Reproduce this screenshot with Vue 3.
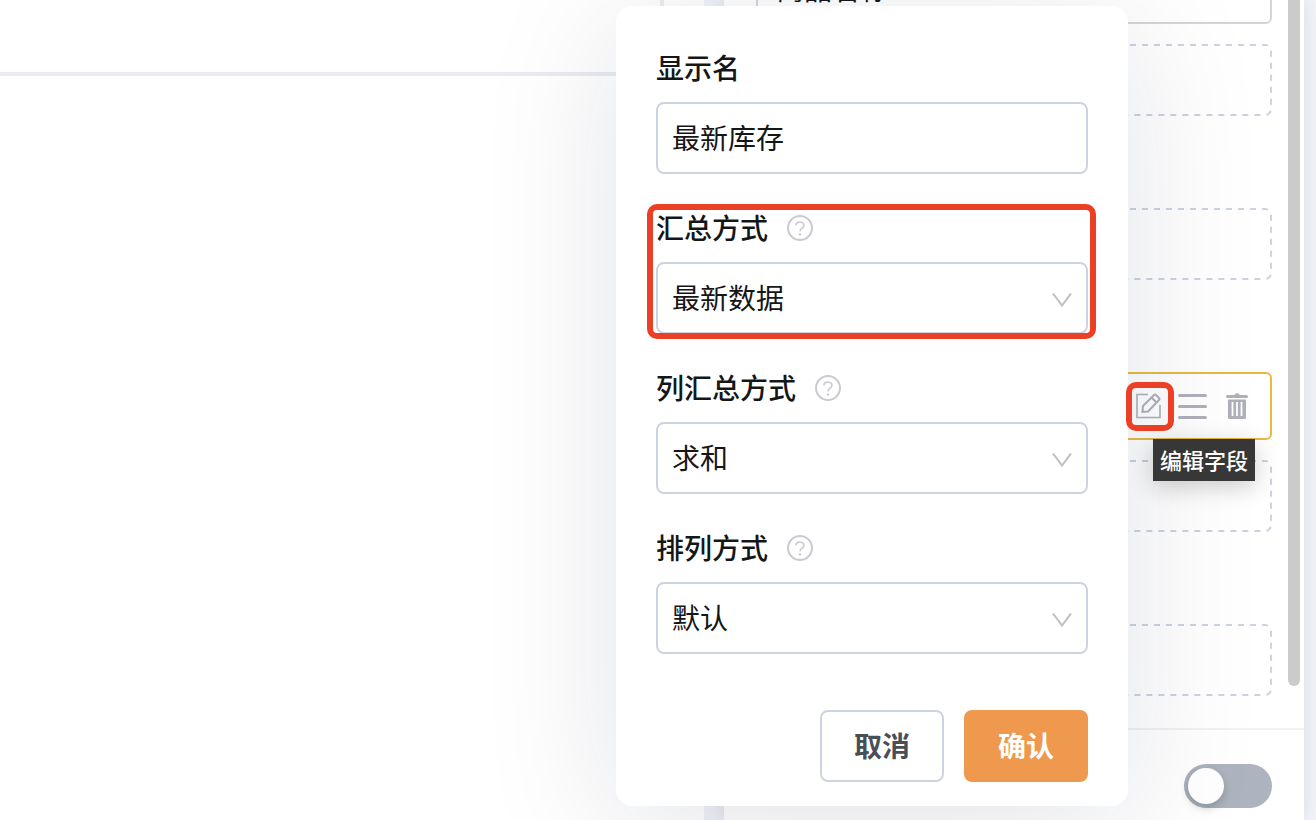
<script setup>
import { ref } from 'vue'

const displayName = ref('最新库存')
const enabled = ref(false)

const fields = ref([
    { id: 'summary', label: '汇总方式', value: '最新数据', options: ['最新数据', '求和', '平均值'], marked: true },
    { id: 'column', label: '列汇总方式', value: '求和', options: ['求和', '平均值', '计数'], marked: false },
    { id: 'sort', label: '排列方式', value: '默认', options: ['默认', '升序', '降序'], marked: false }
])
</script>

<template>
    <div class="page">
        <main class="canvas">
            <div class="canvas_head"></div>
        </main>

        <aside class="panel">
            <div class="panel_body">
                <div class="group">
                    <div class="item">商品名称</div>
                    <svg class="drop"><rect x="1" y="1" rx="6" /></svg>
                </div>
                <div class="group">
                    <svg class="drop"><rect x="1" y="1" rx="6" /></svg>
                </div>
                <div class="group">
                    <div class="item item_active">
                        <div class="edit">
                            <button class="icon_button" type="button" aria-label="编辑字段">
                                <svg width="30" height="30" viewBox="0 0 30 30" fill="none" stroke="#b0b0bb" stroke-width="2">
                                    <path d="M14 3.500H3v23h23V14" stroke-width="1.600" />
                                    <path d="M8.500 21l.5-6L20 4q1-1 2 0l3 3q1 1 0 2L14 20.500zM17.500 6.500l5 5" />
                                </svg>
                            </button>
                            <span class="mark mark_edit"></span>
                            <span class="tooltip" role="tooltip">编辑字段</span>
                        </div>
                        <button class="icon_button" type="button" aria-label="排序">
                            <svg width="30" height="30" viewBox="0 0 30 30" fill="none" stroke="#b0b0bb" stroke-width="3" stroke-linecap="round">
                                <path d="M1.500 4.500h26M1.500 15.500h26M1.500 26.500h26" />
                            </svg>
                        </button>
                        <button class="icon_button" type="button" aria-label="删除">
                            <svg width="30" height="30" viewBox="0 0 30 30" fill="none">
                                <path d="M5.500 5.500h19" stroke="#b0b0bb" stroke-width="3" stroke-linecap="round" />
                                <path d="M12.500 4q0-1.700 2.500-1.700T17.500 4z" fill="#b0b0bb" />
                                <path d="M6 8.500h18v18q0 1.500-1.500 1.500h-15Q6 28 6 26.500z" fill="#b0b0bb" />
                                <path d="M10.500 11v14M15 11v14M19.500 11v14" stroke="#fff" stroke-width="1.800" />
                            </svg>
                        </button>
                    </div>
                    <svg class="drop"><rect x="1" y="1" rx="6" /></svg>
                </div>
                <div class="group">
                    <svg class="drop"><rect x="1" y="1" rx="6" /></svg>
                </div>
                <div class="scrollbar"></div>
            </div>
            <div class="panel_foot">
                <input v-model="enabled" class="switch" type="checkbox" role="switch" aria-label="启用">
            </div>
        </aside>

        <form class="popover" @submit.prevent>
            <div class="field">
                <div class="field_head">
                    <label for="name">显示名</label>
                </div>
                <input id="name" v-model="displayName" class="control" type="text">
            </div>
            <div v-for="f in fields" :key="f.id" class="field">
                <div class="field_head">
                    <label :for="f.id">{{ f.label }}</label>
                    <svg width="26" height="26" viewBox="0 0 26 26" fill="none" stroke="#cbcad2" stroke-width="2">
                        <circle cx="13" cy="13" r="12" />
                        <path d="M9 10.500C9 5.800 17 5.800 17 10.300c0 2.700-4 3-4 6.200" stroke-width="1.600" />
                        <circle cx="13" cy="19.500" r="1.200" fill="#cbcad2" stroke="none" />
                    </svg>
                </div>
                <div class="select_wrap">
                    <select :id="f.id" v-model="f.value" class="control">
                        <option v-for="o in f.options" :key="o">{{ o }}</option>
                    </select>
                    <svg class="arrow" width="20" height="14" viewBox="0 0 20 14" fill="none" stroke="#bfbfbf" stroke-width="2">
                        <path d="M1 .5l9 12 9-12" />
                    </svg>
                </div>
                <span v-if="f.marked" class="mark mark_field"></span>
            </div>
            <div class="actions">
                <button class="btn" type="button">取消</button>
                <button class="btn btn_primary" type="submit">确认</button>
            </div>
        </form>
    </div>
</template>

<style>
    body{
        margin: 0;
        overflow: hidden;
    }
</style>

<style scoped>
    .page{
        position: relative;
        display: flex;
        gap: 20px;
        height: 100vh;
        padding-right: 12px;
        overflow: hidden;
        box-sizing: border-box;
        background: #f2f3f8;
        color: #141617;
        font-family: "Noto Sans CJK SC", "Liberation Sans", sans-serif;
        font-size: 28px;
        line-height: 40px;
    }
    .page *{
        box-sizing: border-box;
    }
    .canvas{
        flex: 1;
        padding-right: 40px;
        background: #fff;
    }
    .canvas_head{
        height: 76px;
        border-right: 4px solid #eaecf1;
        border-bottom: 4px solid #eaecf1;
    }
    .panel{
        display: flex;
        flex-direction: column;
        width: 580px;
        background: #fff;
        box-shadow: 0 0 16px rgba(50, 60, 100, .12);
    }
    .panel_body{
        position: relative;
        display: flex;
        flex: 1;
        flex-direction: column;
        justify-content: flex-end;
        gap: 92px;
        min-height: 0;
        padding: 0 32px 32px;
        overflow: hidden;
    }
    .group{
        display: flex;
        flex-direction: column;
        gap: 20px;
    }
    .item{
        height: 68px;
        padding: 10px 18px;
        border: 2px solid #d5d4da;
        border-radius: 6px;
    }
    .item_active{
        display: flex;
        align-items: center;
        justify-content: flex-end;
        padding: 0 11px;
        border-color: #e9b944;
    }
    .drop{
        display: block;
        width: 100%;
        height: 72px;
    }
    .drop rect{
        width: calc(100% - 2px);
        height: 70px;
        fill: none;
        stroke: #ccd2e0;
        stroke-width: 2px;
        stroke-dasharray: 6px 6px;
        stroke-dashoffset: 5px;
    }
    .edit{
        position: relative;
    }
    .icon_button{
        display: flex;
        align-items: center;
        justify-content: center;
        width: 44px;
        height: 44px;
        padding: 0;
        border: 0;
        background: none;
    }
    .mark{
        position: absolute;
        z-index: 3;
        border: 6px solid #ec4026;
        border-radius: 10px;
        pointer-events: none;
    }
    .mark_edit{
        inset: -2px -3px -3px -1px;
    }
    .mark_field{
        inset: -4px -8px -5px -9px;
    }
    .tooltip{
        position: absolute;
        top: 55px;
        left: 26px;
        z-index: 3;
        padding: 4px 7px 6px;
        background: #373737;
        color: #fff;
        font-size: 22px;
        font-weight: 500;
        line-height: 32px;
        white-space: nowrap;
        box-shadow: 0 6px 24px rgba(0, 0, 0, .2);
    }
    .scrollbar{
        position: absolute;
        top: -20px;
        right: 4px;
        bottom: 42px;
        width: 12px;
        border-radius: 6px;
        background: #cbcbcb;
    }
    .panel_foot{
        display: flex;
        align-items: center;
        justify-content: flex-end;
        height: 92px;
        padding: 22px 32px 0;
        border-top: 2px solid #f2f2f3;
    }
    .switch{
        width: 88px;
        height: 44px;
        margin: 0;
        padding: 4px;
        border-radius: 22px;
        background: #adb3bf;
        appearance: none;
    }
    .switch::before{
        display: block;
        width: 36px;
        height: 36px;
        border-radius: 50%;
        background: #fff;
        box-shadow: 0 4px 8px rgba(0, 35, 11, .2);
        content: "";
    }
    .switch:checked{
        background: #ef994e;
    }
    .switch:checked::before{
        margin-left: auto;
    }
    .popover{
        position: absolute;
        top: 6px;
        right: 188px;
        z-index: 2;
        display: flex;
        flex-direction: column;
        gap: 34px;
        width: 512px;
        padding: 42px 40px 24px;
        border-radius: 16px;
        background: #fff;
        box-shadow: 0 20px 140px rgba(15, 25, 60, .12);
    }
    .field{
        position: relative;
        display: flex;
        flex-direction: column;
        gap: 14px;
    }
    .field_head{
        display: flex;
        align-items: center;
        gap: 19px;
        height: 40px;
        font-weight: 500;
    }
    .field_head label{
        padding-bottom: 2px;
    }
    .select_wrap{
        position: relative;
    }
    .control{
        display: block;
        width: 100%;
        height: 72px;
        margin: 0;
        padding: 0 14px 2px;
        border: 2px solid #ced3e1;
        border-radius: 8px;
        outline: 0;
        background: #fff;
        color: inherit;
        font: inherit;
        appearance: none;
    }
    .arrow{
        position: absolute;
        top: 31px;
        right: 16px;
        pointer-events: none;
    }
    .actions{
        display: flex;
        justify-content: flex-end;
        gap: 20px;
        padding-top: 22px;
    }
    .btn{
        width: 124px;
        height: 72px;
        padding: 0 0 2px;
        border: 2px solid #ced3e1;
        border-radius: 8px;
        background: #fff;
        color: #484f57;
        font: inherit;
        font-weight: 700;
    }
    .btn_primary{
        border-color: #ef994e;
        background: #ef994e;
        color: #fff;
    }
</style>
